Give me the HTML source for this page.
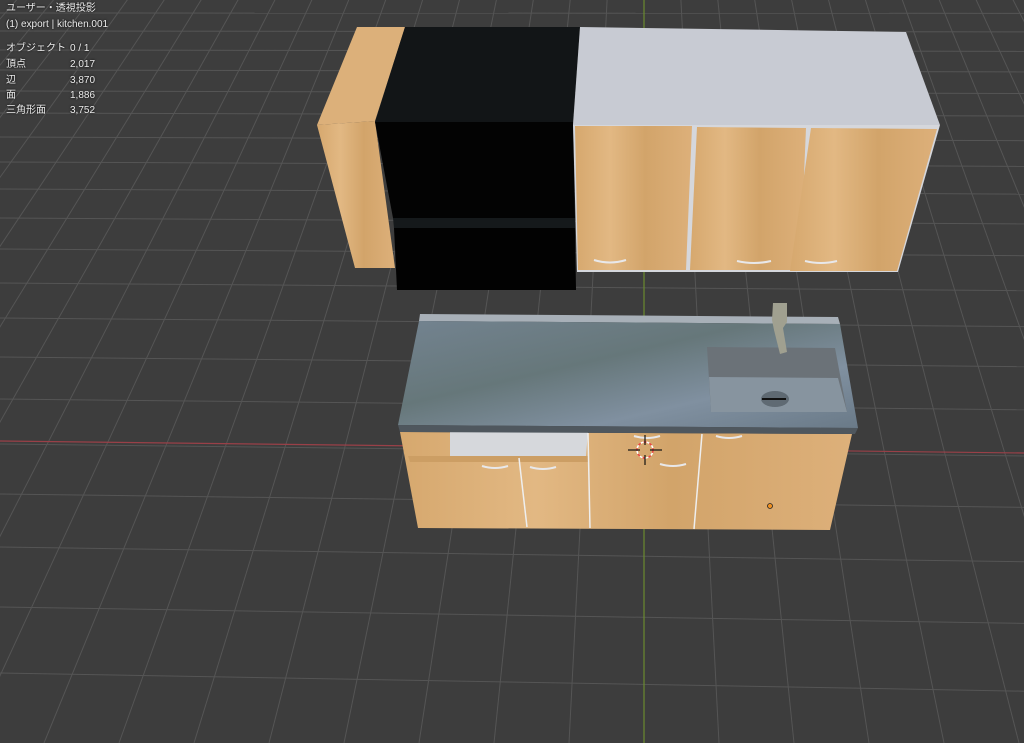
<!DOCTYPE html><html><head><meta charset="utf-8"><style>
html,body{margin:0;padding:0;background:#3d3d3d;width:1024px;height:743px;overflow:hidden}
svg{position:absolute;left:0;top:0}
.t{position:absolute;left:6px;font:10px "Liberation Sans","Noto Sans CJK JP",sans-serif;color:#ececec;line-height:12px;white-space:nowrap;width:200px;text-shadow:0 0 2px #000}
.v{position:absolute;left:64px;top:0}
</style></head><body>
<svg width="1024" height="743" viewBox="0 0 1024 743">
<defs>
<linearGradient id="wood" x1="0" x2="1" y1="0" y2="0">
<stop offset="0" stop-color="#d6a86e"/><stop offset=".3" stop-color="#e2b883"/><stop offset=".6" stop-color="#d2a46a"/><stop offset="1" stop-color="#ddb07a"/></linearGradient>
<linearGradient id="steel" x1="0" x2="1" y1="0" y2="1">
<stop offset="0" stop-color="#738390"/><stop offset=".4" stop-color="#66777a"/><stop offset=".7" stop-color="#8090a0"/><stop offset="1" stop-color="#6a7a88"/></linearGradient>
</defs>
<g stroke="#555" stroke-width="1" fill="none" id="grid"></g>
<line x1="0" y1="441" x2="1024" y2="453" stroke="#9a4048" stroke-width="1.2"/>
<line x1="644" y1="0" x2="644" y2="743" stroke="#6a8a30" stroke-width="1.2"/>
<polygon points="357,27 405,27 375,121 317,125" fill="#dcb07a"/>
<polygon points="317,125 375,121 395,268 355,268" fill="url(#wood)"/>
<polygon points="405,27 580,27 573,122 375,122" fill="#121517"/>
<polygon points="375,122 573,122 575,218 393,218" fill="#030303"/>
<polygon points="393,218 575,218 575,228 394,228" fill="#15191b"/>
<polygon points="394,228 575,228 576,290 397,290" fill="#020202"/>
<polygon points="580,27 906,32 940,125 573,125" fill="#c8cbd3"/>
<polygon points="573,125 940,125 898,272 577,272" fill="#d5d7dc"/>
<polygon points="575,126 692,126 686,270 578,270" fill="url(#wood)"/>
<polygon points="697,127 806,128 800,270 690,270" fill="url(#wood)"/>
<polygon points="811,128 937,129 897,271 790,271" fill="url(#wood)"/>
<g stroke="#e8e8ea" stroke-width="2" fill="none">
<path d="M594 260 q16 5 32 0"/><path d="M737 261 q17 4 34 0"/><path d="M805 261 q16 4 32 0"/></g>
<polygon points="400,432 852,434 830,530 418,528" fill="url(#wood)"/>
<polygon points="450,432 588,432 586,456 450,456" fill="#d6d8dc"/>
<polygon points="408,456 588,456 588,462 410,462" fill="#cc9e64"/>
<g stroke="#eee" stroke-width="1.5"><line x1="588" y1="433" x2="590" y2="528"/><line x1="702" y1="434" x2="694" y2="529"/><line x1="519" y1="458" x2="527" y2="527"/></g>
<g stroke="#e8e8ea" stroke-width="2" fill="none">
<path d="M482 466 q13 4 26 0"/><path d="M530 467 q13 4 26 0"/><path d="M634 436 q13 4 26 0"/><path d="M660 464 q13 4 26 0"/><path d="M716 436 q13 4 26 0"/></g>
<polygon points="420,314 838,317 840,324 419,321" fill="#a8b0b8"/>
<polygon points="419,321 840,324 858,428 398,425" fill="url(#steel)"/>
<polygon points="398,425 858,428 855,434 400,432" fill="#4f575e"/>
<polygon points="707,347 835,348 847,412 711,412" fill="#6b7278"/>
<polygon points="709,377 838,378 847,412 711,412" fill="#87949f"/>
<ellipse cx="775" cy="399" rx="14" ry="8" fill="#5f6a73"/>
<path d="M762 399 h24" stroke="#111" stroke-width="2"/>
<polygon points="773,303 787,303 787,322 783,328 787,352 780,354 774,330 772,320" fill="#a0a090"/>
<circle cx="645" cy="450" r="8" fill="none" stroke="#e44" stroke-width="1.5" stroke-dasharray="3 3"/>
<circle cx="645" cy="450" r="8" fill="none" stroke="#fff" stroke-width="1.5" stroke-dasharray="3 3" stroke-dashoffset="3"/>
<g stroke="#111" stroke-width="1.2"><line x1="628" y1="450" x2="640" y2="450"/><line x1="650" y1="450" x2="662" y2="450"/><line x1="645" y1="435" x2="645" y2="445"/><line x1="645" y1="455" x2="645" y2="465"/></g>
<circle cx="770" cy="506" r="2.5" fill="#f09020" stroke="#222" stroke-width=".8"/>
</svg>
<div class="t" style="top:3px">ユーザー・透視投影</div>
<div class="t" style="top:19px">(1) export | kitchen.001</div>
<div class="t" style="top:43px">オブジェクト<span class="v">0 / 1</span></div>
<div class="t" style="top:59px">頂点<span class="v">2,017</span></div>
<div class="t" style="top:75px">辺<span class="v">3,870</span></div>
<div class="t" style="top:90px">面<span class="v">1,886</span></div>
<div class="t" style="top:105px">三角形面<span class="v">3,752</span></div>
<script>
var g=document.getElementById('grid'),s='';
var ys=[13,31,50,70,91,113,137,162,189,218,249,283,318,357,399,444,494,547,607,673,745];
ys.forEach(function(y){s+='<line x1="0" y1="'+y+'" x2="1024" y2="'+(y+12*(y/444))+'"/>';});
for(var n=-25;n<=25;n++){var xb=644+75*n;s+='<line x1="644" y1="-720" x2="'+xb+'" y2="743"/>';}
g.innerHTML=s;
</script>
</body></html>
